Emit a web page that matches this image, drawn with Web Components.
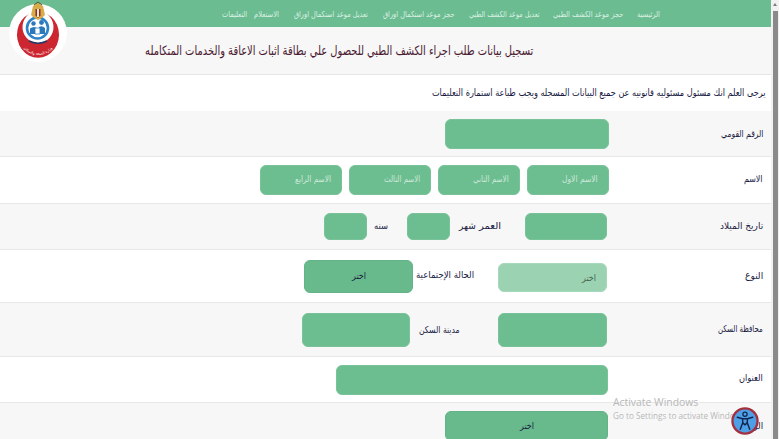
<!DOCTYPE html>
<html lang="ar">
<head>
<meta charset="utf-8">
<title>تسجيل بيانات</title>
<style>
html,body{margin:0;padding:0;height:439px;overflow:hidden;background:#fff}
body{font-family:"DejaVu Sans","Noto Sans",sans-serif;display:flex;direction:ltr}
</style>
</head>
<body>
<x-page>
  <x-nav>
    <x-link w="23" style="margin-left:14px">الرئيسية</x-link>
    <x-link w="70" style="margin-left:13px">حجز موعد الكشف الطبي</x-link>
    <x-link w="71" style="margin-left:14px">تعديل موعد الكشف الطبي</x-link>
    <x-link w="72" style="margin-left:15px">حجز موعد استكمال اوراق</x-link>
    <x-link w="74" style="margin-left:15px">تعديل موعد استكمال اوراق</x-link>
    <x-link w="25" style="margin-left:7px">الاستعلام</x-link>
    <x-link w="25">التعليمات</x-link>
  </x-nav>
  <x-band w="388">تسجيل بيانات طلب اجراء الكشف الطبي للحصول علي بطاقة اثبات الاعاقة والخدمات المتكامله</x-band>
  <x-notice w="334">يرجى العلم انك مسئول مسئوليه قانونيه عن جميع البيانات المسجله ويجب طباعة استمارة التعليمات</x-notice>

  <x-row label="الرقم القومي" lw="42" shade style="--h:46px;--label-y:0px">
    <x-field w="164" h="30"></x-field>
  </x-row>
  <x-row label="الاسم" lw="19" style="--h:47px;--label-y:-1px">
    <x-field w="82" h="30" ph="الاسم الاول" style="margin-left:7px"></x-field>
    <x-field w="82" h="30" ph="الاسم الثاني" style="margin-left:7px"></x-field>
    <x-field w="82" h="30" ph="الاسم الثالث" style="margin-left:7px"></x-field>
    <x-field w="82" h="30" ph="الاسم الرابع"></x-field>
  </x-row>
  <x-row label="تاريخ الميلاد" lw="43" shade style="--h:46px;--label-y:-1px">
    <x-field w="82" h="27" style="margin-right:2px;margin-left:24px"></x-field>
    <x-caption w="22" style="margin-left:3px;margin-top:-1px">العمر</x-caption>
    <x-caption w="17" style="margin-left:9px;margin-top:-1px">شهر</x-caption>
    <x-field w="43" h="27" style="margin-left:19px"></x-field>
    <x-caption w="14" style="margin-left:7px;margin-top:-1px">سنه</x-caption>
    <x-field w="43" h="27"></x-field>
  </x-row>
  <x-row label="النوع" lw="18" style="--h:53px;--label-y:0px">
    <x-field w="109" h="29" light select="اختر" style="margin-right:2px;margin-left:24px;margin-top:3px"></x-field>
    <x-caption w="58" style="margin-left:3px;margin-top:-2px">الحالة الإجتماعية</x-caption>
    <x-field w="109" h="33" dark select="اختر"></x-field>
  </x-row>
  <x-row label="محافظة السكن" lw="45" shade style="--h:54px;--label-y:-1px">
    <x-field w="109" h="34" style="margin-right:2px;margin-left:38px"></x-field>
    <x-caption w="41" style="margin-left:9px">مدينة السكن</x-caption>
    <x-field w="108" h="34"></x-field>
  </x-row>
  <x-row label="العنوان" lw="24" style="--h:46px;--label-y:-2px">
    <x-field w="272" h="30" style="margin-right:1px"></x-field>
  </x-row>
  <x-row label="الوظيفة" lw="28" shade style="--h:60px;--align:flex-start;--label-y:-7px">
    <x-field w="163" h="30" dark select="اختر" style="margin-right:1px;margin-top:8px"></x-field>
  </x-row>

  <x-logo></x-logo>
  <x-watermark></x-watermark>
  <x-access></x-access>
</x-page>
<x-scrollbar></x-scrollbar>

<script>
/* The reference's Arabic face is narrower than the one available: each text is
   condensed horizontally to the width it has in the reference. */
function fit(root){
  root.querySelectorAll("[data-w]").forEach(t => {
    const s = parseFloat(t.dataset.w) / t.offsetWidth;
    t.style.transform = "scaleX(" + s + ")";
  });
}
const FIT = `.t{display:inline-block;white-space:nowrap;transform-origin:100% 50%;direction:rtl}`;
const define = (name, render) => customElements.define(name, class extends HTMLElement{
  connectedCallback(){
    if(this.shadowRoot) return;
    this.attachShadow({mode:"open"}).innerHTML = render(this);
    fit(this.shadowRoot);
  }
});
const w = (el,a="w") => el.getAttribute(a);

define("x-page", () => `<style>
:host{display:block;position:relative;width:771px;height:439px;overflow:hidden;flex:none}
</style><slot></slot>`);

define("x-nav", () => `<style>
:host{display:flex;direction:rtl;align-items:center;height:27px;background:#6bbc90;padding-right:111px;box-sizing:border-box}
</style><slot></slot>`);

define("x-link", el => `<style>
:host{display:block;flex:none;width:${w(el)}px;font:8.4px/12px "DejaVu Sans",sans-serif;color:#dcf1e5;direction:rtl}
${FIT}
</style><span class="t" data-w="${w(el)}"><slot></slot></span>`);

define("x-band", el => `<style>
:host{display:flex;direction:rtl;align-items:center;box-sizing:border-box;height:48px;padding:0 238px 0 0;background:#f7f7f7;border-bottom:1px solid #e6e6e6;font:13px/16px "DejaVu Sans",sans-serif;color:#4b1a32}
${FIT}
</style><span class="t" data-w="${w(el)}"><slot></slot></span>`);

define("x-notice", el => `<style>
:host{display:flex;direction:rtl;align-items:center;box-sizing:border-box;height:36px;padding:0 5px 0 0;background:#fff;font:10px/14px "DejaVu Sans",sans-serif;color:#17193f}
${FIT}
</style><span class="t" data-w="${w(el)}"><slot></slot></span>`);

define("x-row", el => `<style>
:host{display:flex;direction:rtl;box-sizing:border-box;height:var(--h);background:${el.hasAttribute("shade")?"#f7f7f7":"#fff"};border-bottom:1px solid #e8e8e8}
.label{flex:none;width:162px;box-sizing:border-box;padding-right:8px;display:flex;align-items:center;position:relative;top:var(--label-y,0);font:9.6px/12px "DejaVu Sans",sans-serif;color:#17193f}
.body{display:flex;flex:1;align-items:var(--align,center);min-width:0}
${FIT}
</style><div class="label"><span class="t" data-w="${w(el,"lw")}">${w(el,"label")}</span></div><div class="body"><slot></slot></div>`);

define("x-field", el => {
  const ph = w(el,"ph") || "", sel = w(el,"select") || "";
  const light = el.hasAttribute("light"), dark = el.hasAttribute("dark");
  const tw = ph ? 36 : 14;
  return `<style>
:host{display:flex;flex:none;direction:rtl;box-sizing:border-box;width:${w(el)}px;height:${w(el,"h")}px;align-items:center;
 justify-content:${sel && !light ? "center":"flex-start"};
 padding:0 10px ${sel?0:2}px;border-radius:6px;
 background:${light?"#9bd3b2":dark?"#68ba8d":"#6cbd90"};
 border:1px solid ${light?"#a6d9bb":dark?"#62b387":"#78c39a"};
 font:8.6px/10px "DejaVu Sans",sans-serif;
 color:${ph?"#cfeadb":light?"#47644f":"#17193f"}}
${FIT}
</style>${(ph||sel) ? `<span class="t" data-w="${tw}">${ph||sel}</span>` : ""}`;
});

define("x-caption", el => `<style>
:host{display:block;flex:none;direction:rtl;width:${w(el)}px;font:9.6px/12px "DejaVu Sans",sans-serif;color:#17193f}
${FIT}
</style><span class="t" data-w="${w(el)}"><slot></slot></span>`);

define("x-logo", () => `<style>
:host{position:absolute;left:9px;top:0;width:58px;height:64px;display:block}
svg{display:block;overflow:visible}
</style>
<svg width="58" height="64" viewBox="0 0 58 64">
  <defs><path id="arc" d="M11 42 A19 19 0 0 0 47 42"/></defs>
  <circle cx="29" cy="33" r="29" fill="#fff"/>
  <path d="M20 14 A21 23 0 1 0 38 14 A15.5 16 0 1 1 20 14Z" fill="#cc2730"/>
  <text font-family="DejaVu Sans,sans-serif" font-size="3.6" fill="#fff" text-anchor="middle"><textPath href="#arc" startOffset="50%">وزارة الصحة والسكان</textPath></text>
  <circle cx="28.5" cy="28" r="10.5" fill="#fff" stroke="#2f82c6" stroke-width="2.6"/>
  <circle cx="24.5" cy="23.5" r="2.2" fill="#2b78bb"/>
  <circle cx="32.5" cy="22.5" r="2.4" fill="#2b78bb"/>
  <path d="M21 34 V28.5 Q24 26 27 27.5 L27 34Z M30 34 V27 Q33 25 36 28 V34Z" fill="#2b78bb"/>
  <path d="M26 28 H31 V34 H26Z" fill="#fff" stroke="#2b78bb" stroke-width=".8"/>
  <path d="M20 41 Q29 45.5 38 41" fill="none" stroke="#24396a" stroke-width="1.6"/>
  <path d="M24 6 L29 3 L34 6 L36 15 Q33 18.5 29 20 Q25 18.5 22 15Z" fill="#d7ac49"/>
  <path d="M26.5 9 H31.5 V15.5 L29 18 L26.5 15.5Z" fill="#8f2d2a"/>
  <path d="M28 9 H30 V17 H28Z" fill="#f1e6cf"/>
  <path d="M25 5 L29 2 L33 5" fill="none" stroke="#5f5128" stroke-width="1"/>
</svg>`);

define("x-watermark", () => `<style>
:host{position:absolute;left:613px;top:395px;display:block;direction:ltr;white-space:nowrap;pointer-events:none;color:#b8b8b8;font-family:"Open Sans","Noto Sans",sans-serif}
.a{font-size:10.4px;line-height:14px}
.b{font-size:8.2px;line-height:14px}
</style><div class="a">Activate Windows</div><div class="b">Go to Settings to activate Windows.</div>`);

define("x-access", () => `<style>
:host{position:absolute;left:731px;top:407px;width:28px;height:28px;display:block}
svg{display:block}
</style>
<svg width="28" height="28" viewBox="0 0 29 29">
  <circle cx="14.5" cy="14.5" r="13" fill="#4f9fe6" stroke="#a3303f" stroke-width="2.4"/>
  <circle cx="14.5" cy="7.6" r="2.2" fill="none" stroke="#10264f" stroke-width="1.3"/>
  <path d="M6.5 10.6 L12 12.2 L12.2 16.4 L9.6 23 M22.5 10.6 L17 12.2 L16.8 16.4 L19.4 23 M12 12.2 H17 M12.2 16.4 L14.5 18.5 L16.8 16.4" fill="none" stroke="#10264f" stroke-width="1.5" stroke-linejoin="round" stroke-linecap="round"/>
</svg>`);

define("x-scrollbar", () => `<style>
:host{display:flex;flex-direction:column;align-items:center;flex:none;width:8px;height:439px;background:#f1f1f1}
.arrow{width:0;height:0;margin:3px 0 5px;border:2.5px solid transparent;border-top:0;border-bottom:3px solid #7a7a7a}
.thumb{flex:1;width:5px;background:#8a8a8a}
</style><div class="arrow"></div><div class="thumb"></div>`);
</script>
</body>
</html>
